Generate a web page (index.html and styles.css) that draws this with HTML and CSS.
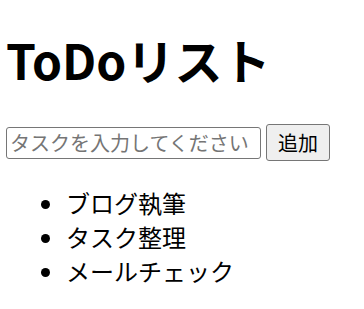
FILE: index.html
```html
<!DOCTYPE html>
<html lang="ja">
<head>
  <meta charset="UTF-8" />
  <title>ToDoリスト</title>
  <link rel="stylesheet" href="styles.css">
</head>
<body>
  <h1>ToDoリスト</h1>
  <div class="form">
    <input type="text" id="taskInput" placeholder="タスクを入力してください">
    <button id="addBtn">追加</button>
  </div>
  <ul id="taskList">
    <li>ブログ執筆</li>
    <li>タスク整理</li>
    <li>メールチェック</li>
  </ul>
</body>
</html>
```

FILE: styles.css
```css
body {
  font-family: "Noto Sans CJK JP", sans-serif;
  font-size: 24px;
  margin: 8px 6px;
}

h1 {
  font-size: 48px;
  margin: 16px 0 30px;
}

.form {
  display: flex;
  align-items: center;
  gap: 5px;
}

input {
  box-sizing: border-box;
  font-family: "Noto Sans CJK JP", sans-serif;
  font-size: 20px;
  width: 255px;
  height: 32px;
  margin: 0;
  padding: 0 3px;
  border: 1px solid #767676;
  border-radius: 3px;
}

input::placeholder {
  color: #757575;
}

button {
  box-sizing: border-box;
  font-family: "Noto Sans CJK JP", sans-serif;
  font-size: 20px;
  width: 64px;
  height: 37px;
  margin: 0;
  padding: 0;
  color: #000;
  background: #efefef;
  border: 1px solid #767676;
  border-radius: 3px;
}

ul {
  margin: 25px 0;
  padding-left: 60px;
}

li {
  line-height: 34px;
}
```
